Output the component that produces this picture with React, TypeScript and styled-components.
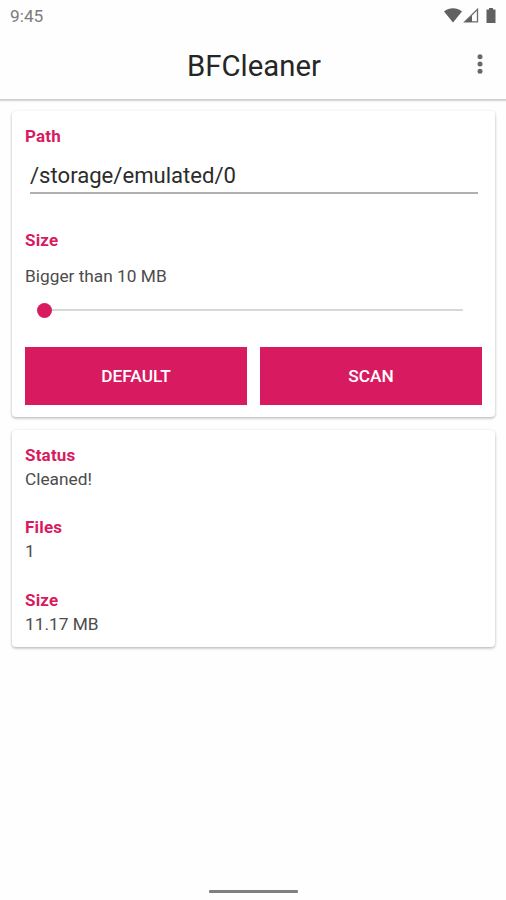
import React from "react";
import styled, { createGlobalStyle } from "styled-components";

const accent = "#d81b60";

const GlobalStyle = createGlobalStyle`
  * { box-sizing: border-box; }
  body { margin: 0; background: #fff; font-family: Roboto, sans-serif; color: #4c4c4c; }
`;

const Screen = styled.main`
  width: 506px;
  height: 900px;
  display: flex;
  flex-direction: column;
  background: #fefefe;
  overflow: hidden;
`;

const StatusBar = styled.div`
  height: 32px;
  flex: none;
  display: flex;
  align-items: center;
  justify-content: space-between;
  padding: 0 8px 0 10px;
  font-size: 17.3px;
  color: #7c7c7c;
`;

const AppBar = styled.header`
  height: 67px;
  flex: none;
  display: grid;
  grid-template-columns: 52px 1fr 52px;
  align-items: center;
  box-shadow: 0 1px 0 #d0d0d0, 0 2px 0 #dadada, 0 3px 1px #f4f4f4;
`;

const Title = styled.h1`
  margin: 0 0 0 2px;
  grid-column: 2;
  text-align: center;
  font-size: 29.3px;
  font-weight: 400;
  line-height: 34px;
  color: #262626;
`;

const MenuButton = styled.button`
  border: 0;
  padding: 0;
  margin-top: -3px;
  background: none;
  height: 40px;
  display: grid;
  place-items: center;
`;

const Content = styled.div`
  flex: 1;
  display: flex;
  flex-direction: column;
  gap: 13px;
  padding: 12px 11px 0 12px;
`;

const Card = styled.section<{ $height: number }>`
  height: ${(p) => p.$height}px;
  padding: 13px 13px 0;
  border-radius: 4px;
  background: #fff;
  box-shadow: 0 1px 3px rgba(0, 0, 0, 0.26), 0 2px 3px rgba(0, 0, 0, 0.06);
`;

const Label = styled.h2<{ $top?: number }>`
  margin: ${(p) => p.$top ?? 0}px 0 0;
  font-size: 17px;
  font-weight: 700;
  line-height: 24px;
  letter-spacing: 0.2px;
  color: ${accent};
`;

const Value = styled.p<{ $top?: number }>`
  margin: ${(p) => p.$top ?? 0}px 0 0;
  font-size: 17.3px;
  font-weight: 400;
  line-height: 24px;
`;

const PathInput = styled.input`
  display: block;
  width: 448px;
  height: 36px;
  margin: 10px 0 0 5px;
  padding: 0 0 1px;
  border: 0;
  border-bottom: 2px solid #b0b0b0;
  background: transparent;
  font: 400 22.1px Roboto, sans-serif;
  color: #2c2c2c;
  outline: 0;
`;

const Slider = styled.div`
  display: flex;
  align-items: center;
  height: 16px;
  margin: 14px 19px 0 12px;
`;

const Thumb = styled.div`
  width: 15px;
  height: 15px;
  border-radius: 50%;
  background: ${accent};
`;

const Track = styled.div`
  flex: 1;
  height: 2px;
  background: #d8d8d8;
`;

const Buttons = styled.div`
  display: grid;
  grid-template-columns: 1fr 1fr;
  gap: 13px;
  margin-top: 29px;
`;

const ActionButton = styled.button`
  height: 58px;
  padding: 0;
  border: 0;
  background: ${accent};
  color: #fff;
  font: 500 17.3px Roboto, sans-serif;
`;

const HomeBar = styled.div`
  align-self: center;
  width: 89px;
  height: 3px;
  margin-bottom: 7px;
  border-radius: 1px;
  background: #808080;
`;

export default function App() {
  return (
    <Screen>
      <GlobalStyle />
      <StatusBar>
        <span>9:45</span>
        <svg width="54" height="18" viewBox="0 0 54 18" fill="#616161">
          <path d="M0 4.500C5.500.2 12.500.2 18 4.500L9 15.500Z" />
          <path d="M33.500 2.200V14.900H20.800Z" fill="none" stroke="#6c6c6c" strokeWidth="1.300" />
          <path d="M28 8.500V15H20.500Z" />
          <path d="M42.500 2.500H45V1H49V2.500H51.500V16H42.500Z" />
        </svg>
      </StatusBar>
      <AppBar>
        <Title>BFCleaner</Title>
        <MenuButton aria-label="More options">
          <svg width="6" height="20" viewBox="0 0 6 20" fill="#686868">
            <circle cx="3" cy="2.700" r="2.500" />
            <circle cx="3" cy="10" r="2.500" />
            <circle cx="3" cy="17.300" r="2.500" />
          </svg>
        </MenuButton>
      </AppBar>
      <Content>
        <Card $height={306}>
          <Label>Path</Label>
          <PathInput defaultValue="/storage/emulated/0" aria-label="Path" />
          <Label $top={34}>Size</Label>
          <Value $top={12}>Bigger than 10 MB</Value>
          <Slider>
            <Thumb />
            <Track />
          </Slider>
          <Buttons>
            <ActionButton>DEFAULT</ActionButton>
            <ActionButton>SCAN</ActionButton>
          </Buttons>
        </Card>
        <Card $height={217}>
          <Label>Status</Label>
          <Value>Cleaned!</Value>
          <Label $top={24}>Files</Label>
          <Value>1</Value>
          <Label $top={25}>Size</Label>
          <Value>11.17 MB</Value>
        </Card>
      </Content>
      <HomeBar />
    </Screen>
  );
}
